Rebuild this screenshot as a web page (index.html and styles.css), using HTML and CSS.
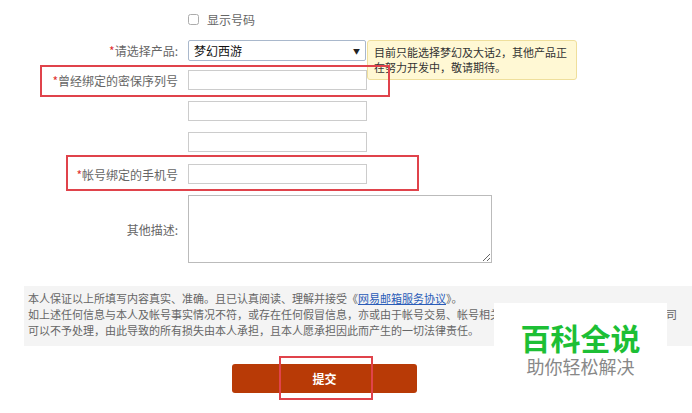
FILE: index.html
```html
<!DOCTYPE html>
<html lang="zh-CN">
<head>
    <meta charset="UTF-8">
    <meta name="viewport" content="width=device-width, initial-scale=1.0">
    <title>帐号申诉</title>
    <link rel="stylesheet" href="styles.css">
</head>
<body>
    <div class="page">
        <form class="form">
            <div class="row check-row">
                <span class="label"></span>
                <label class="check"><input type="checkbox"> 显示号码</label>
            </div>
            <div class="row select-row">
                <span class="label"><em>*</em>请选择产品:</span>
                <div class="select">
                    <span>梦幻西游</span>
                    <span class="arrow">▼</span>
                </div>
                <div class="tip">目前只能选择梦幻及大话2，其他产品正在努力开发中，敬请期待。</div>
            </div>
            <div class="row r2">
                <span class="label"><em>*</em>曾经绑定的密保序列号</span>
                <input class="field" type="text">
            </div>
            <div class="row r3">
                <span class="label"></span>
                <input class="field" type="text">
            </div>
            <div class="row r3">
                <span class="label"></span>
                <input class="field" type="text">
            </div>
            <div class="row r4">
                <span class="label"><em>*</em>帐号绑定的手机号</span>
                <input class="field" type="text">
            </div>
            <div class="row r3 area-row">
                <span class="label">其他描述:</span>
                <textarea class="area"></textarea>
            </div>
        </form>

        <div class="notice">
            本人保证以上所填写内容真实、准确。且已认真阅读、理解并接受《<a href="#">网易邮箱服务协议</a>》。<br>
            如上述任何信息与本人及帐号事实情况不符，或存在任何假冒信息，亦或由于帐号交易、帐号相关纠纷等导致帐号无法使用，网易公司<br>
            可以不予处理，由此导致的所有损失由本人承担，且本人愿承担因此而产生的一切法律责任。
        </div>

        <div class="actions">
            <button class="submit" type="button">提交</button>
        </div>

        <div class="mark mark-1"></div>
        <div class="mark mark-2"></div>
        <div class="mark mark-3"></div>

        <div class="watermark">
            <div class="wm-title">百科全说</div>
            <div class="wm-sub">助你轻松解决</div>
        </div>
    </div>
</body>
</html>
```

FILE: styles.css
```css
body {
    margin: 0;
    background: #fff;
    font-family: "Noto Sans CJK SC", "Liberation Sans", sans-serif;
    font-size: 12px;
    color: #444;
}
.page {
    position: relative;
    width: 692px;
    height: 413px;
    overflow: hidden;
}
.form {
    padding-top: 12px;
}
.row {
    display: flex;
    align-items: center;
    position: relative;
}
.label {
    width: 178px;
    padding-right: 10px;
    text-align: right;
    white-space: nowrap;
    color: #666;
}
.label em {
    font-style: normal;
    color: #e03030;
}
.check-row {
    height: 14px;
}
.check {
    display: flex;
    align-items: center;
    color: #666;
}
.check input {
    width: 11px;
    height: 11px;
    margin: 0 8px 0 0;
    opacity: 0.6;
}
.select-row {
    margin-top: 14px;
    height: 21px;
}
.select {
    box-sizing: border-box;
    width: 178px;
    height: 21px;
    border: 1px solid #a9b8cc;
    border-radius: 2px;
    display: flex;
    align-items: center;
    justify-content: space-between;
    padding: 0 5px;
    color: #111;
}
.arrow {
    font-size: 7px;
    color: #222;
}
.tip {
    position: absolute;
    left: 367px;
    top: 0;
    box-sizing: border-box;
    width: 210px;
    height: 40px;
    padding: 4px 6px;
    background: #fff8d4;
    border: 1px solid #efdf9c;
    border-radius: 3px;
    font-size: 11px;
    line-height: 15px;
    color: #333;
}
.field {
    box-sizing: border-box;
    width: 179px;
    height: 20px;
    margin: 0;
    border: 1px solid #ccc;
    padding: 0 4px;
}
.r2 {
    margin-top: 9px;
}
.r3 {
    margin-top: 11px;
}
.r4 {
    margin-top: 12px;
}
.area {
    box-sizing: border-box;
    width: 304px;
    height: 68px;
    margin: 0;
    border: 1px solid #bbb;
    resize: both;
}
.notice {
    margin: 23px 0 0 24px;
    height: 60px;
    box-sizing: border-box;
    padding: 4px 4px 0 4px;
    background: #f4f4f4;
    font-size: 11px;
    line-height: 16px;
    color: #666;
    white-space: nowrap;
    overflow: hidden;
}
.notice a {
    color: #2a5cb8;
}
.actions {
    margin: 18px 0 0 232px;
}
.submit {
    width: 185px;
    height: 29px;
    border: none;
    border-radius: 3px;
    background: #b83a06;
    color: #fff;
    font-family: inherit;
    font-size: 12px;
    font-weight: bold;
}
.mark {
    position: absolute;
    border: 2px solid #e0434b;
    box-sizing: border-box;
}
.mark-1 {
    left: 40px;
    top: 65px;
    width: 350px;
    height: 32px;
}
.mark-2 {
    left: 66px;
    top: 155px;
    width: 353px;
    height: 36px;
}
.mark-3 {
    left: 279px;
    top: 356px;
    width: 94px;
    height: 44px;
}
.watermark {
    position: absolute;
    left: 494px;
    top: 303px;
    width: 173px;
    height: 84px;
    background: #fff;
    text-align: center;
}
.wm-title {
    margin-top: 17px;
    font-size: 30px;
    line-height: 34px;
    font-weight: bold;
    color: #1dbf35;
}
.wm-sub {
    font-size: 18px;
    line-height: 24px;
    color: #888;
}
```
